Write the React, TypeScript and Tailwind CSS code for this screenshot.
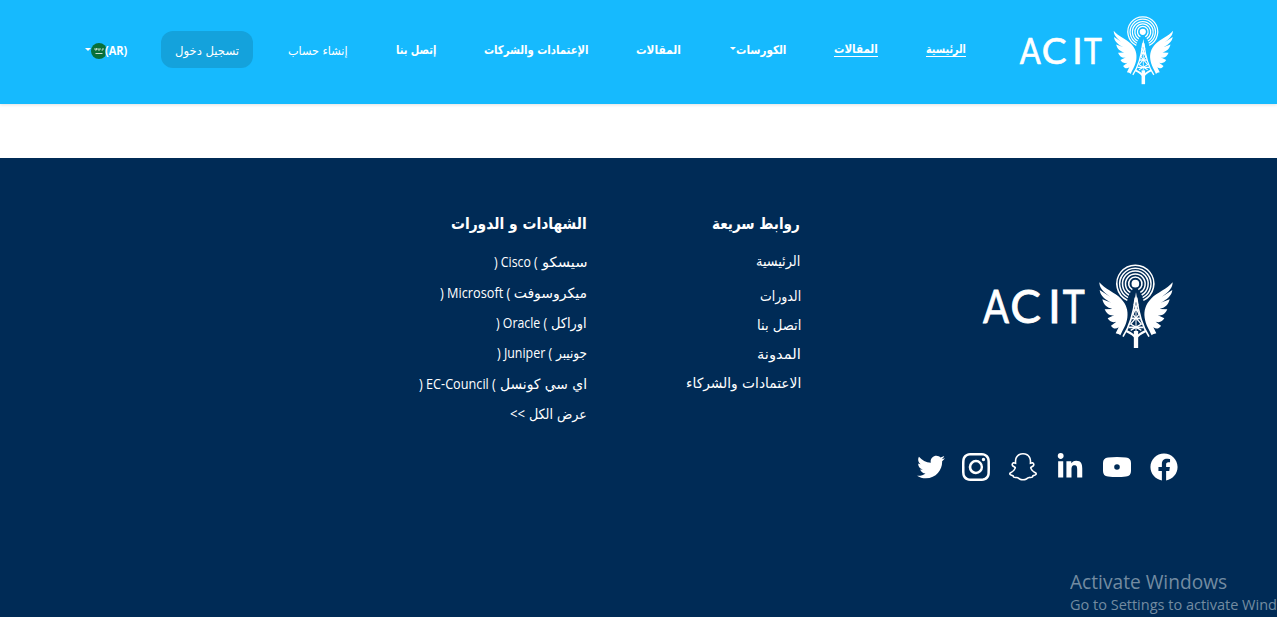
import { useLayoutEffect, useRef, useState } from "react";
import { BsInstagram, BsSnapchat } from "react-icons/bs";
import { FaFacebook, FaLinkedinIn, FaTwitter } from "react-icons/fa";

type FitProps = { text: string; width: number; className?: string; ltr?: boolean };

/** A single line of text condensed or widened to fill a given width. */
function Fit({ text, width, className = "", ltr = false }: FitProps) {
  const ref = useRef<HTMLSpanElement>(null);
  const [scale, setScale] = useState(1);
  useLayoutEffect(() => {
    if (ref.current) setScale(width / ref.current.offsetWidth);
  }, [text, width]);
  return (
    <span className="inline-flex shrink-0 justify-start" style={{ width }}>
      <span
        ref={ref}
        dir={ltr ? "ltr" : "rtl"}
        className={`inline-block shrink-0 whitespace-nowrap ${ltr ? "origin-left" : "origin-right"} ${className}`}
        style={{ transform: `scaleX(${scale})` }}
      >
        {text}
      </span>
    </span>
  );
}

const WING =
  "M418 94 C434 114 464 124 483 143 C499 160 505 178 502 200 C499 222 489 234 481 253 C477 249 474 249 467 247 L476 229 C466 236 458 232 453 224 L469 212 C457 216 448 211 443 202 L462 193 C449 195 439 188 434 175 L457 174 C441 170 431 162 427 145 L454 155 C434 145 421 134 419 117 L450 137 C428 122 418 109 418 94 Z";

function Logo({ className }: { className: string }) {
  return (
    <svg viewBox="66 36 576 258" className={className} fill="#fff" preserveAspectRatio="none">
      <g fontFamily="Lato, sans-serif" fontSize="138" direction="ltr" stroke="#fff" strokeWidth="2.500">
        <text x="69" y="216" textLength="78" lengthAdjust="spacingAndGlyphs">A</text>
        <text x="151" y="216" textLength="92" lengthAdjust="spacingAndGlyphs">C</text>
        <text x="264" y="216">I</text>
        <text x="308" y="216" textLength="66" lengthAdjust="spacingAndGlyphs">T</text>
      </g>
      <circle cx="526" cy="98" r="11.500" />
      <g fill="none" stroke="#fff" strokeWidth="4.600">
        <path d="M517 116 A20 20 0 1 1 535 116" />
        <path d="M511 124 A29.500 29.500 0 1 1 541 124" />
        <path d="M507 132 A38.500 38.500 0 1 1 545 132" />
        <path d="M504 140 A47 47 0 1 1 548 140" />
        <path d="M502 148 A55.500 55.500 0 1 1 550 148" />
      </g>
      <path d={WING} />
      <path d={WING} transform="matrix(-1 0 0 1 1056 0)" />
      <path d="M528 124 L523 154 L533 154 Z" />
      <g fill="none" stroke="#fff" strokeWidth="5">
        <path d="M526 140 C521 185 508 228 489 257 M530 140 C535 185 548 228 567 257" />
        <path d="M520 177 L536 177 M515 202 L541 202 M506 229 L550 229" />
        <path d="M522 158 L537 190 L512 219 L544 238 M534 158 L519 190 L544 219 L512 238" strokeWidth="4" />
        <path d="M499 240 C512 246 522 252 528 262 C534 252 544 246 557 240" strokeWidth="7" />
        <path d="M528 145 V240" strokeWidth="3" />
        <path d="M528 240 V291" strokeWidth="13" />
      </g>
    </svg>
  );
}

function Caret() {
  return <span className="-mt-0.5 h-0 w-0 border-x-[3px] border-t-[3px] border-x-transparent border-t-white" />;
}

function Flag() {
  return (
    <svg viewBox="0 0 16 16" className="size-4">
      <circle cx="8" cy="8" r="8" fill="#087039" />
      <path d="M4 5v2h1.500V5M7 5v2h2V5M10.500 7h1.500V5" fill="none" stroke="#c9e2d3" strokeWidth=".9" />
      <path d="M4.500 10.500h7" stroke="#c9e2d3" strokeWidth="1" />
    </svg>
  );
}

function YoutubeIcon() {
  return (
    <svg viewBox="0 0 28 20" className="h-5 w-7" fill="#fff">
      <path
        fillRule="evenodd"
        d="M5 .5Q14-.5 23 .5Q28 1 28 6v8q0 5-5 5.500Q14 20.500 5 19.500Q0 19 0 14V6Q0 1 5 .5ZM14 7.200a2.800 2.800 0 1 0 0 5.600a2.800 2.800 0 0 0 0-5.600Z"
      />
    </svg>
  );
}

const navText = "text-[12px] font-bold leading-5";

const quickLinks = [
  { text: "الرئيسية", width: 44, row: "h-[35px] pr-px" },
  { text: "الدورات", width: 41, row: "h-[29px]" },
  { text: "اتصل بنا", width: 44, row: "h-[29px]" },
  { text: "المدونة", width: 44, row: "h-[29px]" },
  { text: "الاعتمادات والشركاء", width: 115, row: "h-[29px]" },
];

const courses = [
  { name: "سيسكو", width: 45, vendor: ") Cisco (", vendorWidth: 44 },
  { name: "ميكروسوفت", width: 73, vendor: ") Microsoft (", vendorWidth: 70 },
  { name: "اوراكل", width: 36, vendor: ") Oracle (", vendorWidth: 51 },
  { name: "جونيبر", width: 31, vendor: ") Juniper (", vendorWidth: 55 },
  { name: "اي سي كونسل", width: 87, vendor: ") EC-Council (", vendorWidth: 77 },
  { name: "عرض الكل", width: 58, vendor: ">>", vendorWidth: 15 },
];

export default function App() {
  return (
    <div
      dir="rtl"
      className="flex h-[617px] w-[1277px] flex-col overflow-hidden bg-white font-['DejaVu_Sans',sans-serif] text-white"
    >
      <header className="flex h-[104px] shrink-0 items-center bg-[#16bafe] pr-[103px] pb-[5px] shadow-[0_1px_3px_rgba(0,0,0,0.12)]">
        <Logo className="ml-[53px] h-[70px] w-[155px]" />
        <nav className="flex items-center">
          <a className="ml-12 flex">
            <Fit text="الرئيسية" width={40} className="border-b border-white text-[12px] font-bold leading-[14px]" />
          </a>
          <a className="ml-[48px] flex">
            <Fit text="المقالات" width={44} className="border-b border-white text-[12px] font-bold leading-[14px]" />
          </a>
          <a className="ml-[49px] flex items-center">
            <Fit text="الكورسات" width={50} className={navText} />
            <Caret />
          </a>
          <a className="ml-[48px] flex">
            <Fit text="المقالات" width={45} className={navText} />
          </a>
          <a className="ml-[47px] flex">
            <Fit text="الإعتمادات والشركات" width={105} className={navText} />
          </a>
          <a className="ml-[48px] flex">
            <Fit text="إتصل بنا" width={40} className={navText} />
          </a>
          <a className="ml-[35px] flex pt-[3px]">
            <Fit text="إنشاء حساب" width={60} className="text-[12px] leading-5" />
          </a>
          <button className="ml-[32px] flex h-[37px] w-[92px] items-center justify-center rounded-xl bg-[#14a2dc] pt-[3px]">
            <Fit text="تسجيل دخول" width={64} className="text-[12px] leading-5" />
          </button>
          <a className="flex items-center pt-0.5">
            <Fit text="(AR)" width={22} ltr className="font-['Open_Sans',sans-serif] text-[12px] font-bold leading-5" />
            <Flag />
            <Caret />
          </a>
        </nav>
      </header>

      <footer className="mt-[54px] flex grow items-start bg-[#002b56]">
        <section className="flex w-[476px] shrink-0 flex-col pt-[105px]">
          <Logo className="mr-[103px] h-[86px] w-[192px]" />
          <div className="mt-[103px] mr-[99px] flex h-[30px] items-center gap-[19px]">
            <FaFacebook className="size-7" />
            <YoutubeIcon />
            <FaLinkedinIn className="size-7" />
            <BsSnapchat className="size-7" />
            <BsInstagram className="size-7" />
            <FaTwitter className="-mr-[2px] size-7" />
          </div>
        </section>

        <section className="flex w-[214px] shrink-0 flex-col pt-[52px]">
          <h2 className="flex pr-px">
            <Fit text="روابط سريعة" width={88} className="text-base font-bold leading-7" />
          </h2>
          <ul className="mt-[10px] flex flex-col">
            {quickLinks.map((l) => (
              <li key={l.text} className={`flex items-start ${l.row}`}>
                <Fit text={l.text} width={l.width} className="text-[14px] leading-[26px]" />
              </li>
            ))}
          </ul>
        </section>

        <section className="flex flex-col pt-[52px]">
          <h2 className="flex">
            <Fit text="الشهادات و الدورات" width={136} className="text-base font-bold leading-7" />
          </h2>
          <ul className="mt-[9px] flex flex-col">
            {courses.map((c) => (
              <li key={c.name} className="flex h-[30.4px] items-center gap-[4px]">
                <Fit text={c.name} width={c.width} className="text-[14px] leading-[26px]" />
                <Fit
                  text={c.vendor}
                  width={c.vendorWidth}
                  className="font-['Open_Sans',sans-serif] text-[14px] leading-[26px]"
                />
              </li>
            ))}
          </ul>
        </section>
      </footer>

      <div
        dir="ltr"
        className="absolute top-[570px] left-[1070px] flex w-[207px] flex-col font-['Open_Sans',sans-serif] text-[#738ba1]"
      >
        <Fit text="Activate Windows" width={157} ltr className="text-[20px] leading-6" />
        <Fit text="Go to Settings to activate Wind" width={207} ltr className="text-[14.5px] leading-[22px]" />
      </div>
    </div>
  );
}
